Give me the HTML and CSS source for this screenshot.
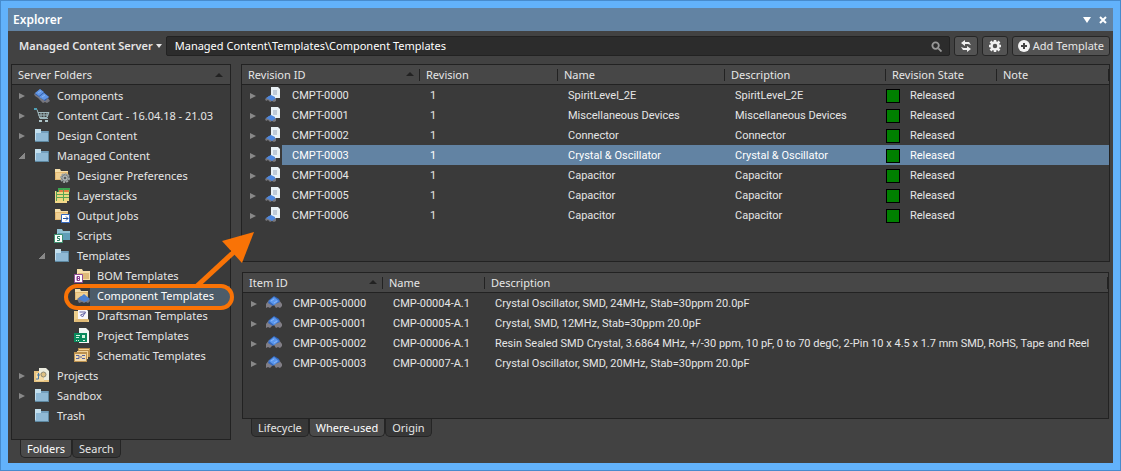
FILE: index.html
```html
<!DOCTYPE html>
<html lang="en">
<head>
<meta charset="utf-8">
<title>Explorer</title>
<link rel="stylesheet" href="styles.css">
</head>
<body>
<svg class="sprite" aria-hidden="true">
  <symbol id="folder" viewBox="0 0 16 16"><path fill="#c4e0ee" d="M1 1h6v2h8v11H1z"/><path fill="#739fbd" d="M7 3h8v11H1v-1L7 5z"/><path fill="#8fb9d5" d="M2 5h12v8H2z"/><path stroke="#5d879f" d="M1 13.500h14M14.500 3v11"/></symbol>
  <symbol id="tan" viewBox="0 0 16 16"><path fill="#f6dfaa" d="M1 1h5l1 2h7v9H1z"/><path fill="#e2b971" d="M1 4h13v8H1z"/><path fill="#efcf92" d="M2 5h11v6H2z"/></symbol>
  <symbol id="chip" viewBox="0 0 16 16"><path fill="#817e86" d="M0 9l3-4h10l3 4v2l-2 2-2-1-2 1-2-3-2 1-2 2-2-1-2 1-1-2z"/><path fill="#3569bd" d="M2 8l1-3 5-4 5 3 1 3-5 2-2 2z"/><path fill="#5a97ee" d="M3 6l5-4 5 4-5 4z"/><path stroke="#8bb6f5" d="M5 6l3-2M8 8l3-2"/></symbol>
  <symbol id="chips" viewBox="0 0 16 16"><path fill="#77777f" d="M0 6l4-3 2 2 5 4 3 1 2 3-3 2-2-1-2 1-5-5-3-2z"/><path fill="#315ba6" d="M1 6l5-5 9 8-4 4z"/><path fill="#6196e6" d="M1 5l5-4 4 3-5 4zM5 9l5-4 5 4-5 3z"/><path stroke="#8cb7f1" d="M4 5l3-2M8 9l3-2"/></symbol>
  <symbol id="cart" viewBox="0 0 16 16"><g fill="none" stroke="#9fb8bd"><path d="M3 1.500l3 9h8M4 4.500h11l-2 5H5M4 7h10M7 4v6M10 4v6M13 4v5"/><path stroke="#4f9fb4" stroke-width="2" d="M0 1h3"/></g><path fill="#afc6ca" d="M5 12h3v2H5zM11 12h3v2h-3z"/></symbol>
  <symbol id="revision" viewBox="0 0 16 16"><path fill="#77777d" d="M0 12l4-3 7 2v3l-2 1-2-1-2 1-2-2-2 1z"/><path fill="#4d86dd" d="M1 11l5-3 5 3-4 3z"/><path fill="#e9f1f6" d="M6 0h7l2 2v9H6z"/><path fill="#bfcbd9" d="M8 3h4v5H8z"/><path fill="#4d86dd" d="M3 10l3-2 4 2v1l-3 1z"/></symbol>
  <symbol id="gearfolder" viewBox="0 0 16 16"><use href="#tan"/><circle cx="11" cy="10" r="4" fill="#6d7475" stroke="#9ba2a2" stroke-width="2" stroke-dasharray="2 1"/><circle cx="11" cy="10" r="3" fill="#868c8c"/><circle cx="11" cy="10" r="2" fill="#565c5c" stroke="#c8cdcd"/></symbol>
  <symbol id="layers" viewBox="0 0 16 16"><path fill="#f3d889" d="M1 3h2v10h10v2H1z"/><path fill="#3ba550" d="M4 0h12v4H4z"/><path fill="#ecd77f" d="M3 4h12v9H3z"/><path fill="#e37a42" d="M5 2h4v2H5zM10 2h5v2h-5z"/><path stroke="#58a352" d="M3 6.500h12M3 9.500h12M9.500 1v12M2.500 3v10"/></symbol>
  <symbol id="output" viewBox="0 0 16 16"><use href="#tan"/><path fill="#fff" stroke="#3569bd" d="M7.500 6.500h8v8h-8z"/><path fill="none" stroke="#204f9e" d="M9 10.500h5M12 8.500l2 2-2 2"/></symbol>
  <symbol id="scripts" viewBox="0 0 16 16"><path fill="#91c2d4" d="M3 1h5l1 2h7v9H3z"/><path fill="#5f9eb8" d="M4 5h12v7H4z"/><path fill="#fff" stroke="#3c9270" d="M.5 6.500h8v8h-8z"/><path fill="none" stroke="#298061" d="M6 8.500H3.500v2h2v2H3"/></symbol>
  <symbol id="bom" viewBox="0 0 16 16"><path fill="#f6dfaa" d="M3 1h5l1 2h7v9H3z"/><path fill="#dfba79" d="M4 5h11v6H4z"/><path fill="#fff" stroke="#914d97" d="M.5 6.500h8v8h-8z"/><path fill="none" stroke="#873b8f" d="M3 8.500h2.500v2H3h2.500v2H3zM3.500 8v5"/></symbol>
  <symbol id="component" viewBox="0 0 16 16"><use href="#tan"/><path fill="#777984" d="M3 11l4-3 8 2 1 3-2 2-2-1-2 1-2-1-3 1z"/><path fill="#4b80d2" d="M4 11l6-5 6 5-5 3z"/></symbol>
  <symbol id="draftsman" viewBox="0 0 16 16"><path fill="#edce8c" d="M0 3h4v9h11v2H0z"/><path fill="#f8f7fa" d="M4 0h7l3 3v8H4z"/><path fill="none" stroke="#6462a6" d="M5.500 4h6l-3 5-2-2 5-2"/><path fill="#e1bb76" d="M2 11h13l-2 3H0z"/></symbol>
  <symbol id="project" viewBox="0 0 16 16"><path fill="#f3f7f5" d="M5 0h7l3 3v12H5z"/><path fill="#09895c" d="M0 5h13v9H0z"/><path stroke="#d5f3df" d="M2 7.500h4M2 9.500h3M2 12.500h1M4 12.500h1M9 12.500h2"/><path fill="#d5f3df" d="M8 7h3v3H8z"/></symbol>
  <symbol id="schematic" viewBox="0 0 16 16"><path fill="#b88c49" d="M4 0h12v9H4z"/><path fill="#f2d49a" d="M5 1h10v1H5zM3 3h11v8H3z"/><path fill="#bc914f" d="M0 4h13v10H0z"/><path fill="#f3dbad" d="M1 6h11v7H1z"/><path fill="none" stroke="#56629e" d="M2 7.500h3v3H2M6 9h2M8 7.500h3M8 10.500h3"/></symbol>
  <symbol id="projects" viewBox="0 0 16 16"><path fill="#e8c480" d="M0 3h5v9h10v2H0z"/><path fill="#ececdf" d="M5 0h7l3 3v9H5z"/><path fill="#f4dba6" d="M2 5h8v8H2z"/><path fill="none" stroke="#4779a6" d="M3 7h3M4.500 5v6H2"/><circle cx="9.500" cy="6.500" r="2.500" fill="#dec083" stroke="#8c8874"/></symbol>
</svg>

<main class="window">
  <header class="titlebar"><h1>Explorer</h1>
    <div class="window-buttons">
      <button aria-label="Panel menu"><svg viewBox="0 0 8 8"><path fill="#fff" d="M0 1h8L4 7z"/></svg></button>
      <button aria-label="Close"><svg viewBox="0 0 8 8"><path stroke="#fff" stroke-width="2" d="M1 1l6 6M7 1L1 7"/></svg></button>
    </div>
  </header>

  <div class="toolbar">
    <button class="server">Managed Content Server <svg class="caret" viewBox="0 0 6 4"><path fill="#e6e6e6" d="M0 0h6L3 4z"/></svg></button>
    <label class="search"><input aria-label="Path" value="Managed Content\Templates\Component Templates">
      <svg viewBox="0 0 12 12"><g fill="none" stroke="#999" stroke-width="2"><circle cx="5" cy="5" r="3.500"/><path d="M8 8l3.500 3.500"/></g></svg></label>
    <button class="tool" aria-label="Refresh"><svg viewBox="0 0 12 12"><path fill="#f2f2f2" d="M5 0v2h4l2 3-3-1H5v2L1 3zM7 12v-2H3L1 7l3 1h3V6l4 3z"/></svg></button>
    <button class="tool settings" aria-label="Settings"><svg viewBox="0 0 12 12"><circle cx="6" cy="6" r="3.500" fill="none" stroke="#f2f2f2" stroke-width="2.500"/><path stroke="#f2f2f2" stroke-width="2.500" d="M6 0v2M6 10v2M0 6h2M10 6h2M1.500 1.500l2 2M8.500 8.500l2 2M10.500 1.500l-2 2M3.500 8.500l-2 2"/></svg></button>
    <button class="tool add"><svg viewBox="0 0 12 12"><circle cx="6" cy="6" r="6" fill="#f5f5f5"/><path stroke="#444" stroke-width="2" d="M6 3v6M3 6h6"/></svg>Add Template</button>
  </div>

  <div class="content">
    <section class="side">
      <nav class="panel tree" aria-label="Server folders">
        <h2>Server Folders<svg class="sort" viewBox="0 0 8 4"><path d="M0 4h8L4 0z"/></svg></h2>
        <ul>
          <li><div class="node"><i class="closed"></i><svg><use href="#chips"/></svg><span>Components</span></div></li>
          <li><div class="node"><i class="closed"></i><svg><use href="#cart"/></svg><span>Content Cart - 16.04.18 - 21.03</span></div></li>
          <li><div class="node"><i class="closed"></i><svg><use href="#folder"/></svg><span>Design Content</span></div></li>
          <li><div class="node"><i class="open"></i><svg><use href="#folder"/></svg><span>Managed Content</span></div>
            <ul>
              <li><div class="node"><i></i><svg><use href="#gearfolder"/></svg><span>Designer Preferences</span></div></li>
              <li><div class="node"><i></i><svg><use href="#layers"/></svg><span>Layerstacks</span></div></li>
              <li><div class="node"><i></i><svg><use href="#output"/></svg><span>Output Jobs</span></div></li>
              <li><div class="node"><i></i><svg><use href="#scripts"/></svg><span>Scripts</span></div></li>
              <li><div class="node"><i class="open"></i><svg><use href="#folder"/></svg><span>Templates</span></div>
                <ul>
                  <li><div class="node"><i></i><svg><use href="#bom"/></svg><span>BOM Templates</span></div></li>
                  <li><div class="node selected"><i></i><svg><use href="#component"/></svg><span>Component Templates</span>
                    <svg class="callout" viewBox="0 -4 200 84" aria-hidden="true"><rect x="6" y="53" width="166" height="22" rx="11" fill="none" stroke="#f97306" stroke-width="4"/><path stroke="#f97306" stroke-width="5" d="M137 53l39-36"/><path fill="#f97306" d="M194-1l-32 9 20 22z"/></svg></div></li>
                  <li><div class="node"><i></i><svg><use href="#draftsman"/></svg><span>Draftsman Templates</span></div></li>
                  <li><div class="node"><i></i><svg><use href="#project"/></svg><span>Project Templates</span></div></li>
                  <li><div class="node"><i></i><svg><use href="#schematic"/></svg><span>Schematic Templates</span></div></li>
                </ul></li>
            </ul></li>
          <li><div class="node"><i class="closed"></i><svg><use href="#projects"/></svg><span>Projects</span></div></li>
          <li><div class="node"><i class="closed"></i><svg><use href="#folder"/></svg><span>Sandbox</span></div></li>
          <li><div class="node"><i></i><svg><use href="#folder"/></svg><span>Trash</span></div></li>
        </ul>
      </nav>
      <div class="tabs"><button class="active">Folders</button><button>Search</button></div>
    </section>

    <section class="details">
      <div class="panel revisions">
        <table>
          <colgroup><col class="c-expand"><col class="c-rev-id"><col class="c-rev"><col class="c-name"><col class="c-desc"><col class="c-state"><col></colgroup>
          <thead><tr><th colspan="2">Revision ID<svg class="sort" viewBox="0 0 8 4"><path d="M0 4h8L4 0z"/></svg></th><th>Revision</th><th>Name</th><th>Description</th><th>Revision State</th><th>Note</th></tr></thead>
          <tbody>
            <tr><td class="lead"><i class="closed"></i><svg><use href="#revision"/></svg></td><td>CMPT-0000</td><td>1</td><td>SpiritLevel_2E</td><td>SpiritLevel_2E</td><td class="state">Released</td><td></td></tr>
            <tr><td class="lead"><i class="closed"></i><svg><use href="#revision"/></svg></td><td>CMPT-0001</td><td>1</td><td>Miscellaneous Devices</td><td>Miscellaneous Devices</td><td class="state">Released</td><td></td></tr>
            <tr><td class="lead"><i class="closed"></i><svg><use href="#revision"/></svg></td><td>CMPT-0002</td><td>1</td><td>Connector</td><td>Connector</td><td class="state">Released</td><td></td></tr>
            <tr class="current"><td class="lead"><i class="closed"></i><svg><use href="#revision"/></svg></td><td>CMPT-0003</td><td>1</td><td>Crystal &amp; Oscillator</td><td>Crystal &amp; Oscillator</td><td class="state">Released</td><td></td></tr>
            <tr><td class="lead"><i class="closed"></i><svg><use href="#revision"/></svg></td><td>CMPT-0004</td><td>1</td><td>Capacitor</td><td>Capacitor</td><td class="state">Released</td><td></td></tr>
            <tr><td class="lead"><i class="closed"></i><svg><use href="#revision"/></svg></td><td>CMPT-0005</td><td>1</td><td>Capacitor</td><td>Capacitor</td><td class="state">Released</td><td></td></tr>
            <tr><td class="lead"><i class="closed"></i><svg><use href="#revision"/></svg></td><td>CMPT-0006</td><td>1</td><td>Capacitor</td><td>Capacitor</td><td class="state">Released</td><td></td></tr>
          </tbody>
        </table>
      </div>
      <div class="usage">
        <div class="panel items">
          <table>
            <colgroup><col class="c-expand"><col class="c-item-id"><col class="c-item-name"><col></colgroup>
            <thead><tr><th colspan="2">Item ID<svg class="sort" viewBox="0 0 8 4"><path d="M0 4h8L4 0z"/></svg></th><th>Name</th><th>Description</th></tr></thead>
            <tbody>
              <tr><td class="lead"><i class="closed"></i><svg><use href="#chip"/></svg></td><td>CMP-005-0000</td><td>CMP-00004-A.1</td><td>Crystal Oscillator, SMD, 24MHz, Stab=30ppm 20.0pF</td></tr>
              <tr><td class="lead"><i class="closed"></i><svg><use href="#chip"/></svg></td><td>CMP-005-0001</td><td>CMP-00005-A.1</td><td>Crystal, SMD, 12MHz, Stab=30ppm 20.0pF</td></tr>
              <tr><td class="lead"><i class="closed"></i><svg><use href="#chip"/></svg></td><td>CMP-005-0002</td><td>CMP-00006-A.1</td><td>Resin Sealed SMD Crystal, 3.6864 MHz, +/-30 ppm, 10 pF, 0 to 70 degC, 2-Pin 10 x 4.5 x 1.7 mm SMD, RoHS, Tape and Reel</td></tr>
              <tr><td class="lead"><i class="closed"></i><svg><use href="#chip"/></svg></td><td>CMP-005-0003</td><td>CMP-00007-A.1</td><td>Crystal Oscillator, SMD, 20MHz, Stab=30ppm 20.0pF</td></tr>
            </tbody>
          </table>
        </div>
        <div class="tabs"><button>Lifecycle</button><button class="active">Where-used</button><button>Origin</button></div>
      </div>
    </section>
  </div>
</main>
</body>
</html>
```
FILE: styles.css
```css
*, *::before, *::after { box-sizing: border-box; }
body {
  margin: 0;
  color: #e6e6e6;
  font: 11px/20px "Noto Sans", "Open Sans", sans-serif;
}
.sprite { position: absolute; width: 0; height: 0; }
button, input { font: inherit; color: inherit; padding: 0; margin: 0; border: 0; background: none; }
svg { display: block; flex: none; }
h1, h2, ul { margin: 0; padding: 0; }

.window {
  display: flex;
  flex-direction: column;
  min-height: 100vh;
  padding: 7px;
  border: 1px solid #478bcd;
  background: #62b2fb;
}
.titlebar {
  display: flex;
  align-items: center;
  justify-content: space-between;
  height: 23px;
  padding: 0 6px 0 5px;
  background: #6283a3;
}
.titlebar h1 { font-size: 12px; font-weight: 600; color: #fff; }
.window-buttons { display: flex; gap: 8px; }
.window-buttons svg { width: 8px; height: 8px; }

.toolbar {
  display: flex;
  align-items: center;
  gap: 4px;
  padding: 5px 3px 8px 11px;
  background: #424242;
}
.server { display: flex; align-items: center; gap: 3px; font-weight: 600; }
.caret { width: 6px; height: 4px; }
.search {
  display: flex;
  flex: 1;
  align-items: center;
  height: 20px;
  padding: 0 7px 0 8px;
  border: 1px solid #222;
  border-radius: 2px;
  background: #2c2c2c;
}
.search input { flex: 1; min-width: 0; height: 18px; color: #fff; }
.search svg { width: 11px; height: 11px; }
.tool {
  display: flex;
  align-items: center;
  justify-content: center;
  gap: 3px;
  width: 24px;
  height: 20px;
  border: 1px solid #262626;
  border-radius: 3px;
  background: #535353;
}
.tool svg { width: 12px; height: 12px; }
.settings { width: 26px; }
.add { width: auto; padding: 0 5px; }

.content {
  display: grid;
  grid-template-columns: 220px minmax(0, 1fr);
  gap: 10px;
  flex: 1;
  padding: 0 3px 5px;
  background: #424242;
}
.side, .details { display: flex; flex-direction: column; }
.details { gap: 10px; padding-bottom: 21px; }
.panel { border: 1px solid #222; background: #3a3a3a; }
.tree { flex: 1; }
.revisions { flex: 1; }
.usage { padding-left: 1px; padding-right: 1px; }
.items { padding-bottom: 45px; }

h2, th {
  height: 20px;
  border-bottom: 1px solid #222;
  background: #474747;
  font-weight: 400;
  font-size: 11px;
  line-height: 19px;
  text-align: left;
}
h2 { display: flex; align-items: center; justify-content: space-between; padding: 0 7px 0 6px; margin-bottom: 1px; }
.sort { width: 8px; height: 4px; fill: #222; }

ul { list-style: none; }
ul ul { padding-left: 20px; }
.node { position: relative; display: flex; align-items: center; height: 20px; padding-left: 7px; }
.node svg { width: 16px; height: 16px; }
.node i { width: 15px; }
.node span { flex: 1; padding-left: 7px; white-space: nowrap; }
.selected span { background: #4c5c69; color: #fff; }
.node .callout { position: absolute; left: 8px; bottom: -7px; width: 200px; height: 84px; z-index: 1; }

i { display: block; flex: none; }
i::before { content: ""; display: block; width: 0; }
.closed::before { border: solid transparent; border-width: 3px 0 3px 6px; border-left-color: #888; }
.open::before { width: 6px; height: 6px; background: linear-gradient(135deg, transparent 50%, #888 50%); }

table { width: 100%; table-layout: fixed; border-collapse: separate; border-spacing: 0; }
th { position: relative; padding: 0 0 0 6px; }
th .sort { position: absolute; right: 6px; top: 7px; }
th::after { content: ""; position: absolute; right: 0; top: 4px; width: 1px; height: 12px; background: #222; }
td {
  height: 20px;
  padding: 2px 0 0 10px;
  font: 11px/18px Roboto, "Liberation Sans", sans-serif;
  vertical-align: top;
  white-space: nowrap;
}
.lead { padding-left: 8px; }
.lead i, .lead svg { display: inline-block; vertical-align: top; }
.lead i { width: 15px; padding-top: 6px; }
.lead svg { width: 16px; height: 16px; }
.current td:not(.lead) { background: #6283a3; color: #fff; }
.state::before {
  content: "";
  display: inline-block;
  width: 14px;
  height: 14px;
  margin: 2px 10px 0 -10px;
  border: 1px solid #000;
  background: #008000;
  vertical-align: top;
}
.c-expand { width: 40px; }
.c-rev-id { width: 138px; }
.c-rev { width: 138px; }
.c-name { width: 167px; }
.c-desc { width: 161px; }
.c-state { width: 111px; }
.c-item-id { width: 100px; }
.c-item-name { width: 102px; }

.tabs { display: flex; padding-left: 9px; }
.tabs button {
  height: 18px;
  padding: 0 6px;
  border: 1px solid #252525;
  border-top: 0;
  border-radius: 0 0 5px 5px;
  background: #373737;
  line-height: 17px;
}
.tabs .active { background: #4a4a4a; color: #fff; }
```
